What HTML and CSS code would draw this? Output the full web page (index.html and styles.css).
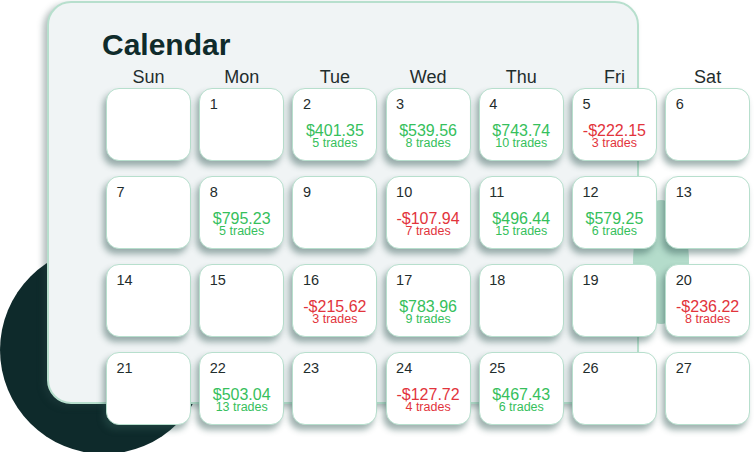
FILE: index.html
```html
<!DOCTYPE html>
<html>
<head>
<meta charset="utf-8">
<link rel="stylesheet" href="styles.css">
</head>
<body>
<div class="scene">
  <div class="blob-dark"></div>
  <div class="panel">
    <div class="blob-mint"></div>
    <h1 class="title">Calendar</h1>
    <div class="weekdays">
      <span>Sun</span><span>Mon</span><span>Tue</span><span>Wed</span><span>Thu</span><span>Fri</span><span>Sat</span>
    </div>
    <div class="grid">
      <div class="cell"></div>
      <div class="cell"><div class="day">1</div></div>
      <div class="cell"><div class="day">2</div><div class="amt pos">$401.35</div><div class="trades pos">5 trades</div></div>
      <div class="cell"><div class="day">3</div><div class="amt pos">$539.56</div><div class="trades pos">8 trades</div></div>
      <div class="cell"><div class="day">4</div><div class="amt pos">$743.74</div><div class="trades pos">10 trades</div></div>
      <div class="cell"><div class="day">5</div><div class="amt neg">-$222.15</div><div class="trades neg">3 trades</div></div>
      <div class="cell"><div class="day">6</div></div>

      <div class="cell"><div class="day">7</div></div>
      <div class="cell"><div class="day">8</div><div class="amt pos">$795.23</div><div class="trades pos">5 trades</div></div>
      <div class="cell"><div class="day">9</div></div>
      <div class="cell"><div class="day">10</div><div class="amt neg">-$107.94</div><div class="trades neg">7 trades</div></div>
      <div class="cell"><div class="day">11</div><div class="amt pos">$496.44</div><div class="trades pos">15 trades</div></div>
      <div class="cell"><div class="day">12</div><div class="amt pos">$579.25</div><div class="trades pos">6 trades</div></div>
      <div class="cell"><div class="day">13</div></div>

      <div class="cell"><div class="day">14</div></div>
      <div class="cell"><div class="day">15</div></div>
      <div class="cell"><div class="day">16</div><div class="amt neg">-$215.62</div><div class="trades neg">3 trades</div></div>
      <div class="cell"><div class="day">17</div><div class="amt pos">$783.96</div><div class="trades pos">9 trades</div></div>
      <div class="cell"><div class="day">18</div></div>
      <div class="cell"><div class="day">19</div></div>
      <div class="cell"><div class="day">20</div><div class="amt neg">-$236.22</div><div class="trades neg">8 trades</div></div>

      <div class="cell"><div class="day">21</div></div>
      <div class="cell"><div class="day">22</div><div class="amt pos">$503.04</div><div class="trades pos">13 trades</div></div>
      <div class="cell"><div class="day">23</div></div>
      <div class="cell"><div class="day">24</div><div class="amt neg">-$127.72</div><div class="trades neg">4 trades</div></div>
      <div class="cell"><div class="day">25</div><div class="amt pos">$467.43</div><div class="trades pos">6 trades</div></div>
      <div class="cell"><div class="day">26</div></div>
      <div class="cell"><div class="day">27</div></div>
    </div>
  </div>
</div>
</body>
</html>
```
FILE: styles.css
```css
* { box-sizing: border-box; }
html, body { margin: 0; padding: 0; background: #ffffff; }
body { font-family: "Liberation Sans", Arial, sans-serif; color: #1f2d2d; }

.scene {
  position: relative;
  width: 754px;
  height: 452px;
  overflow: hidden;
}

.blob-dark {
  position: absolute;
  left: 0;
  top: 246px;
  width: 208px;
  height: 208px;
  border-radius: 50%;
  background: #0e2a2b;
  z-index: 0;
}

.panel {
  position: relative;
  z-index: 1;
  margin: 1px 0 0 47px;
  width: 592px;
  height: 403px;
  background: #f0f4f5;
  border: 2px solid #b7dfcd;
  border-radius: 24px;
  box-shadow: -4px 3px 6px rgba(40, 70, 68, 0.35);
  padding: 26.6px 0 0 0;
}

.blob-mint {
  position: absolute;
  left: 584px;
  top: 197px;
  width: 56px;
  height: 124px;
  border-radius: 50%;
  background: #b4dccb;
  z-index: 0;
}

.title {
  margin: 0 0 0 53px;
  font-size: 30px;
  line-height: 30px;
  font-weight: 700;
  color: #0f2b2b;
}

.weekdays {
  display: grid;
  grid-template-columns: repeat(7, 85px);
  column-gap: 8.2px;
  margin: 8.7px 0 0 57px;
  width: 645px;
  font-size: 18px;
  line-height: 18px;
  text-align: center;
  color: #1f2d2d;
}

.grid {
  position: relative;
  z-index: 1;
  display: grid;
  grid-template-columns: repeat(7, 85px);
  grid-auto-rows: 73px;
  column-gap: 8.2px;
  row-gap: 15px;
  margin: 1.7px 0 0 57px;
  width: 645px;
}

.cell {
  background: #ffffff;
  border: 1.5px solid #b7dfcd;
  border-radius: 13px;
  box-shadow: -3px 5px 6px rgba(45, 85, 80, 0.45);
  padding: 7.1px 8px 0 9.5px;
}

.day {
  font-size: 14.5px;
  line-height: 16px;
  color: #1f2d2d;
}

.amt {
  margin-top: 13.1px;
  font-size: 16px;
  line-height: 12px;
  text-align: center;
  margin-left: -1.5px;
}

.trades {
  font-size: 12.5px;
  line-height: 12px;
  text-align: center;
  margin-left: -1.5px;
}

.pos { color: #36c05c; }
.neg { color: #e2343c; }
```
